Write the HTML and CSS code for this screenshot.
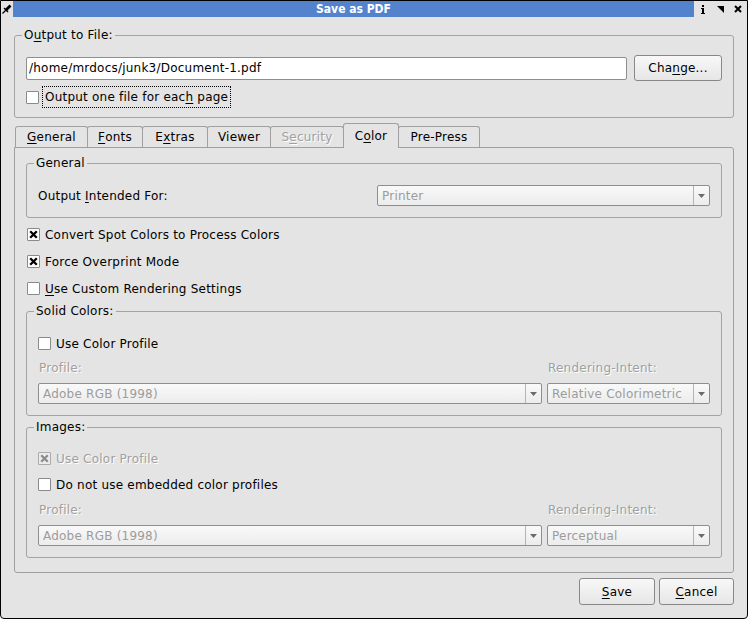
FILE: index.html
```html
<!DOCTYPE html>
<html lang="en">
<head>
<meta charset="utf-8">
<title>Save as PDF</title>
<link rel="stylesheet" href="styles.css">
</head>
<body>
<div class="window">
  <div class="titlebar">
    <div class="tb-pin">
      <svg width="10" height="10" viewBox="0 0 10 10"><path d="M0.5 9.5L4 6" stroke="#000" stroke-width="1.2" fill="none"/><polygon points="3,5 5,7 9.5,2.5 7.5,0.5" fill="#000"/><path d="M2 4L6 8" stroke="#000" stroke-width="1.4"/></svg>
    </div>
    <div class="tb-title">Save as PDF</div>
    <div class="tb-btns">
      <span class="tb-btn tb-info"><svg width="4" height="9" viewBox="0 0 4 9"><rect x="1" y="0" width="2" height="2" fill="#000"/><rect x="1" y="3" width="2" height="6" fill="#000"/><rect x="0" y="3" width="1" height="1" fill="#000"/><rect x="0" y="8" width="4" height="1" fill="#000"/></svg></span>
      <span class="tb-btn tb-shade"><svg width="7" height="7" viewBox="0 0 7 7"><polygon points="0,0 7,0 7,7" fill="#000"/></svg></span>
      <span class="tb-btn tb-close"><svg width="8" height="8" viewBox="0 0 8 8"><path d="M1 1L7 7M7 1L1 7" stroke="#000" stroke-width="2"/></svg></span>
    </div>
  </div>

  <div class="content">
    <fieldset class="group output-group">
      <legend>O<u>u</u>tput to File:</legend>
      <div class="file-row">
        <div class="textfield">/home/mrdocs/junk3/Document-1.pdf</div>
        <div class="button change-btn">Cha<u>n</u>ge...</div>
      </div>
      <div class="check output-check">
        <span class="box"></span>
        <span class="check-label focus">Output one file for eac<u>h</u> page</span>
      </div>
    </fieldset>

    <div class="tabs">
      <div class="tab tab-general"><u>G</u>eneral</div>
      <div class="tab tab-fonts"><u>F</u>onts</div>
      <div class="tab tab-extras">E<u>x</u>tras</div>
      <div class="tab tab-viewer">Viewer</div>
      <div class="tab tab-security disabled">S<u>e</u>curity</div>
      <div class="tab tab-color active">C<u>o</u>lor</div>
      <div class="tab tab-prepress">Pre-Press</div>
    </div>

    <div class="panel">
      <fieldset class="group inner-group">
        <legend>General</legend>
        <div class="intended-row">
          <span class="label">Output <u>I</u>ntended For:</span>
          <div class="combo combo-printer">
            <span class="combo-text">Printer</span>
            <span class="combo-arrow"><svg width="7" height="4" viewBox="0 0 7 4"><polygon points="0,0 7,0 3.5,4" fill="#6a6a6a"/></svg></span>
          </div>
        </div>
      </fieldset>

      <div class="panel-checks">
        <div class="check">
          <span class="box"><svg width="9" height="9" viewBox="0 0 9 9"><path d="M1.2 1.2L7.8 7.8M7.8 1.2L1.2 7.8" stroke="#000" stroke-width="2.3"/></svg></span>
          <span class="check-label">Convert Spot Colors to Process Colors</span>
        </div>
        <div class="check">
          <span class="box"><svg width="9" height="9" viewBox="0 0 9 9"><path d="M1.2 1.2L7.8 7.8M7.8 1.2L1.2 7.8" stroke="#000" stroke-width="2.3"/></svg></span>
          <span class="check-label">Force Overprint Mode</span>
        </div>
        <div class="check">
          <span class="box"></span>
          <span class="check-label"><u>U</u>se Custom Rendering Settings</span>
        </div>
      </div>

      <fieldset class="group inner-group solid-group">
        <legend>Solid Colors:</legend>
        <div class="check">
          <span class="box"></span>
          <span class="check-label">Use Color Profile</span>
        </div>
        <div class="profile-grid">
          <span class="dim-label">Profile:</span>
          <span class="dim-label">Rendering-Intent:</span>
          <div class="combo">
            <span class="combo-text">Adobe RGB (1998)</span>
            <span class="combo-arrow"><svg width="7" height="4" viewBox="0 0 7 4"><polygon points="0,0 7,0 3.5,4" fill="#6a6a6a"/></svg></span>
          </div>
          <div class="combo">
            <span class="combo-text">Relative Colorimetric</span>
            <span class="combo-arrow"><svg width="7" height="4" viewBox="0 0 7 4"><polygon points="0,0 7,0 3.5,4" fill="#6a6a6a"/></svg></span>
          </div>
        </div>
      </fieldset>

      <fieldset class="group inner-group images-group">
        <legend>Images:</legend>
        <div class="check-stack">
          <div class="check disabled">
            <span class="box"><svg width="9" height="9" viewBox="0 0 9 9"><path d="M1.2 1.2L7.8 7.8M7.8 1.2L1.2 7.8" stroke="#8c8c8c" stroke-width="2.3"/></svg></span>
            <span class="check-label">Use Color Profile</span>
          </div>
          <div class="check">
            <span class="box"></span>
            <span class="check-label">Do not use embedded color profiles</span>
          </div>
        </div>
        <div class="profile-grid">
          <span class="dim-label">Profile:</span>
          <span class="dim-label">Rendering-Intent:</span>
          <div class="combo">
            <span class="combo-text">Adobe RGB (1998)</span>
            <span class="combo-arrow"><svg width="7" height="4" viewBox="0 0 7 4"><polygon points="0,0 7,0 3.5,4" fill="#6a6a6a"/></svg></span>
          </div>
          <div class="combo">
            <span class="combo-text">Perceptual</span>
            <span class="combo-arrow"><svg width="7" height="4" viewBox="0 0 7 4"><polygon points="0,0 7,0 3.5,4" fill="#6a6a6a"/></svg></span>
          </div>
        </div>
      </fieldset>
    </div>

    <div class="actions">
      <div class="button save-btn"><u>S</u>ave</div>
      <div class="button cancel-btn"><u>C</u>ancel</div>
    </div>
  </div>
</div>
</body>
</html>
```

FILE: styles.css
```css
* { box-sizing: border-box; }
html, body { margin: 0; padding: 0; background: #ffffff; }
body {
  font-family: "DejaVu Sans", sans-serif;
  font-size: 12px;
  line-height: 14px;
  letter-spacing: 0.22px;
  color: #000;
}
u { text-decoration: underline; text-underline-offset: 2px; }

.window {
  width: 748px;
  height: 619px;
  border: 1px solid #000;
  border-radius: 0 0 4px 4px;
  background: #e4e4e4;
  display: flex;
  flex-direction: column;
  overflow: hidden;
}

/* title bar */
.titlebar { height: 16px; display: flex; flex: none; }
.tb-pin { width: 12px; display: flex; align-items: center; justify-content: center; }
.tb-title {
  flex: 1;
  background: #5383cd;
  color: #fff;
  font-family: "DejaVu Sans Condensed", "DejaVu Sans", sans-serif;
  font-stretch: condensed;
  font-weight: bold;
  font-size: 12px;
  line-height: 16px;
  letter-spacing: 0;
  text-align: center;
}
.tb-btns { display: flex; }
.tb-btn { display: flex; align-items: center; justify-content: center; }
.tb-info { width: 17px; }
.tb-shade { width: 18px; }
.tb-close { width: 18px; }

.content {
  flex: 1;
  display: flex;
  flex-direction: column;
  padding: 11px 13px 13px;
  min-height: 0;
}

/* group boxes */
.group {
  border: 1px solid #a3a3a3;
  border-radius: 3px;
  margin: 0;
  padding: 13px 11px 9px;
  min-width: 0;
}
.group legend {
  padding: 0 2px;
  margin-left: -4px;
  line-height: 14px;
}

.file-row { display: flex; align-items: center; gap: 7px; height: 26px; }
.textfield {
  flex: 1;
  height: 23px;
  border: 1px solid #8e8e8e;
  border-radius: 2px;
  background: #fff;
  padding: 0 2px;
  display: flex;
  align-items: center;
  white-space: nowrap;
}
.button {
  height: 26px;
  border: 1px solid #888;
  border-radius: 3px;
  background: linear-gradient(#f8f8f8, #e6e6e6);
  display: flex;
  align-items: center;
  justify-content: center;
  flex: none;
}
.change-btn { width: 88px; }

/* checkboxes */
.check { display: flex; align-items: center; height: 21px; }
.box {
  width: 13px;
  height: 13px;
  flex: none;
  border: 1px solid #8a8a8a;
  border-radius: 1px;
  background: #fff;
  display: flex;
  align-items: center;
  justify-content: center;
}
.check-label { margin-left: 3px; padding: 0 2px; white-space: nowrap; }
.output-check { margin-top: 5px; height: 22px; }
.focus {
  display: block;
  border: 1px dotted #000;
  height: 22px;
  line-height: 20px;
}
.check.disabled .box { background: #ececec; border-color: #aaaaaa; }
.check.disabled .check-label { color: #a0a0a0; text-shadow: 1px 1px 0 #fff; }

/* tabs */
.tabs {
  display: flex;
  align-items: flex-end;
  height: 24px;
  margin-top: 5px;
  margin-left: 1px;
  position: relative;
  z-index: 1;
  flex: none;
}
.tab {
  height: 21px;
  border: 1px solid #a0a0a0;
  border-bottom: none;
  border-radius: 3px 3px 0 0;
  margin-left: -1px;
  background: #e4e4e4;
  display: flex;
  align-items: center;
  justify-content: center;
  white-space: nowrap;
}
.tab:first-child { margin-left: 0; }
.tab.active { height: 25px; margin-bottom: -1px; padding-bottom: 1px; position: relative; z-index: 2; }
.tab.disabled { color: #a0a0a0; text-shadow: 1px 1px 0 #fff; }
.tab-general { width: 73px; }
.tab-fonts { width: 56px; }
.tab-extras { width: 66px; }
.tab-viewer { width: 64px; }
.tab-security { width: 74px; }
.tab-color { width: 56px; }
.tab-prepress { width: 82px; }

.panel {
  flex: 1;
  border: 1px solid #a0a0a0;
  border-radius: 0 3px 3px 3px;
  padding: 8px 11px 0;
  display: flex;
  flex-direction: column;
  min-height: 0;
}
.inner-group { padding: 15px 11px 11px; }

.intended-row { display: flex; align-items: center; height: 21px; }
.intended-row .label { flex: 1; }

.combo {
  height: 21px;
  border: 1px solid #8e8e8e;
  border-radius: 2px;
  background: linear-gradient(#f9f9f9, #ececec);
  display: flex;
  align-items: stretch;
  color: #9c9c9c;
  min-width: 0;
}
.combo-printer { width: 333px; flex: none; }
.combo-text {
  flex: 1;
  padding-left: 4px;
  display: flex;
  align-items: center;
  white-space: nowrap;
  overflow: hidden;
}
.combo-arrow {
  width: 16px;
  flex: none;
  border-left: 1px solid #b4b4b4;
  display: flex;
  align-items: center;
  justify-content: center;
}

.panel-checks { display: flex; flex-direction: column; gap: 6px; margin-top: 6px; }
.panel-checks .box { margin-left: 1px; }

.solid-group { margin-top: 5px; }
.images-group { margin-top: 4px; padding-top: 14px; }
.check-stack { display: flex; flex-direction: column; gap: 5px; }

.profile-grid {
  display: grid;
  grid-template-columns: 1fr 163px;
  column-gap: 5px;
  row-gap: 8px;
  margin-top: 7px;
}
.images-group .profile-grid { margin-top: 8px; }
.dim-label { color: #a0a0a0; text-shadow: 1px 1px 0 #fff; padding-left: 1px; }

.actions {
  display: flex;
  justify-content: flex-end;
  gap: 4px;
  margin-top: 5px;
  flex: none;
}
.actions .button { height: 27px; }
.save-btn { width: 76px; }
.cancel-btn { width: 75px; }
```
